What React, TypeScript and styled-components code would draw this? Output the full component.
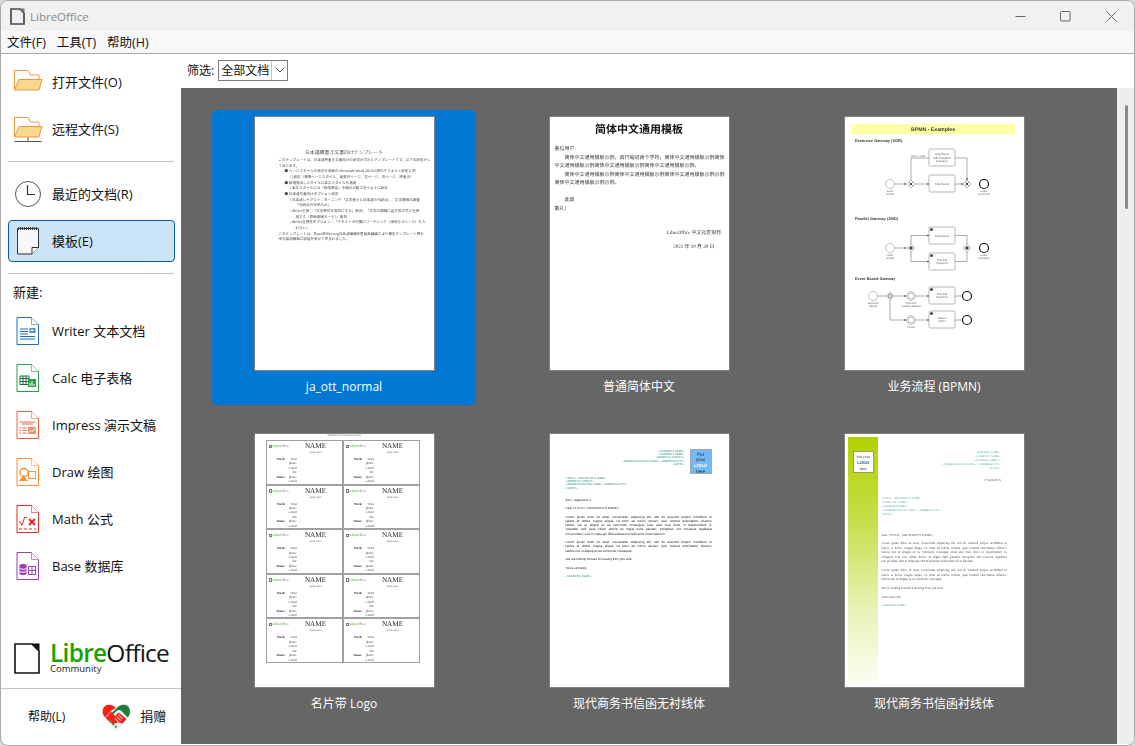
import React, { ReactElement, ReactNode } from 'react';
import styled, { createGlobalStyle } from 'styled-components';

const uiFont = `'Open Sans', 'Noto Sans CJK SC', sans-serif`;
const docFont = `'Liberation Serif', 'Noto Sans CJK SC', serif`;

const GlobalStyle = createGlobalStyle`
  html, body {
    margin: 0;
    padding: 0;
    background: #d6d8dc;
  }
  * {
    box-sizing: border-box;
  }
`;

const Window = styled.div`
  width: 1135px;
  height: 746px;
  display: flex;
  flex-direction: column;
  border: 1px solid #a9a9a9;
  border-radius: 8px;
  overflow: hidden;
  background: #fff;
  font-family: ${uiFont};
  color: #111;
`;

const TitleBar = styled.div`
  height: 30px;
  flex: none;
  display: flex;
  align-items: center;
  padding-left: 9px;
  background: #f1f1f1;
`;

const TitleText = styled.span`
  margin-left: 5px;
  font-size: 11.5px;
  color: #8b8b8b;
`;

const WindowButtons = styled.div`
  margin-left: auto;
  display: flex;
`;

const WindowButton = styled.div`
  width: 45.5px;
  height: 30px;
  display: flex;
  align-items: center;
  justify-content: center;
`;

const MenuBar = styled.div`
  height: 23px;
  flex: none;
  display: flex;
  align-items: center;
  gap: 11px;
  padding: 0 0 1px 6px;
  background: #f8f8f8;
  border-bottom: 1px solid #a8a8a8;
  font-size: 12.5px;
`;

const Body = styled.div`
  flex: 1;
  min-height: 0;
  display: flex;
`;

const Sidebar = styled.nav`
  width: 180px;
  flex: none;
  display: flex;
  flex-direction: column;
  padding-top: 7px;
`;

const NavGroup = styled.div<{ $top?: number }>`
  display: flex;
  flex-direction: column;
  gap: 5px;
  margin-top: ${(p) => p.$top ?? 0}px;
  padding: 0 6px 0 7px;
`;

const NavButton = styled.div<{ $active?: boolean }>`
  height: 42px;
  display: flex;
  align-items: center;
  border: 1px solid ${(p) => (p.$active ? '#0b5ca6' : 'transparent')};
  border-radius: 4px;
  background: ${(p) => (p.$active ? '#cce4f7' : 'transparent')};
  font-size: 13px;
`;

const NavLabel = styled.span`
  padding-bottom: 2px;
`;

const IconSlot = styled.span`
  width: 43px;
  flex: none;
  display: flex;
  justify-content: center;
  padding-right: 6px;
`;

const Divider = styled.div`
  height: 1px;
  margin: 11px 7px 0;
  background: #c4c4c4;
`;

const NewLabel = styled.div`
  height: 18px;
  margin: 9px 0 9px 12px;
  font-size: 13px;
  line-height: 18px;
`;

const LogoRow = styled.div`
  margin-top: auto;
  display: flex;
  align-items: flex-end;
  gap: 10px;
  padding: 0 0 15px 13px;
`;

const LogoMark = styled.span`
  display: flex;
  margin-bottom: -1px;
`;

const LogoText = styled.div`
  display: flex;
  flex-direction: column;
`;

const LogoName = styled.div`
  font-family: 'Open Sans', sans-serif;
  font-size: 24.5px;
  line-height: 24px;
  letter-spacing: -0.75px;
  color: #151515;
  white-space: nowrap;
`;

const LogoLibre = styled.span`
  color: #18a303;
  font-weight: 600;
`;

const LogoEdition = styled.div`
  font-size: 9.5px;
  line-height: 8px;
  color: #222;
`;

const SidebarFooter = styled.div`
  height: 57px;
  flex: none;
  display: flex;
  align-items: center;
  border-top: 1px solid #c4c4c4;
  font-size: 12px;
`;

const HelpLink = styled.span`
  margin-left: 27px;
  padding-bottom: 2px;
`;

const DonateLink = styled.span`
  margin-left: 36px;
  display: flex;
  align-items: center;
  gap: 8px;
  font-size: 13px;
`;

const DonateText = styled.span`
  padding-bottom: 3px;
`;

const Main = styled.main`
  flex: 1;
  min-width: 0;
  display: flex;
  flex-direction: column;
  padding-bottom: 1px;
`;

const FilterBar = styled.div`
  height: 34px;
  flex: none;
  display: flex;
  align-items: center;
  gap: 4px;
  padding: 0 0 2px 6px;
  font-size: 12px;
`;

const FakeSelect = styled.div`
  width: 70px;
  height: 21px;
  display: flex;
  align-items: center;
  justify-content: space-between;
  border: 1px solid #7a7a7a;
  padding-left: 2px;
  font-size: 12px;
`;

const SelectArrow = styled.span`
  width: 16px;
  height: 19px;
  display: flex;
  align-items: center;
  justify-content: center;
  background: #fff;
  border-left: 1px solid #c8c8c8;
`;

const ContentRow = styled.div`
  flex: 1;
  min-height: 0;
  display: flex;
`;

const Gallery = styled.div`
  flex: 1;
  min-width: 0;
  overflow: hidden;
  display: grid;
  grid-template-columns: repeat(3, 264px);
  grid-auto-rows: 295px;
  gap: 22px 31px;
  padding: 22px 0 0 31px;
  background: #666;
`;

const GalleryItem = styled.figure<{ $selected?: boolean }>`
  margin: 0;
  display: flex;
  flex-direction: column;
  align-items: center;
  padding-top: 6px;
  border-radius: 5px;
  background: ${(p) => (p.$selected ? '#0078d4' : 'transparent')};
`;

const Page = styled.div`
  width: 181px;
  height: 255px;
  flex: none;
  overflow: hidden;
  border: 1px solid #808080;
  background: #fff;
  color: #333;
  text-rendering: geometricPrecision;

  & > * {
    filter: blur(0.3px);
  }
`;

const ItemLabel = styled.figcaption`
  margin-top: 8px;
  font-size: 12px;
  line-height: 16px;
  color: #fff;
`;

const ScrollTrack = styled.div`
  width: 17px;
  flex: none;
  padding: 17px 0 0 8px;
  background: #eeeeee;
`;

const ScrollThumb = styled.div`
  width: 3px;
  height: 104px;
  border-radius: 2px;
  background: #8a8a8a;
`;

/* --- template previews --- */

const JaPage = styled.div`
  padding: 33px 24px 0 24px;
  font-family: 'Noto Sans CJK JP', sans-serif;
  font-size: 3.55px;
  line-height: 5.65px;
  color: #444;
`;

const JaTitle = styled.div`
  margin-bottom: 2px;
  text-align: center;
  font-size: 4.9px;
  line-height: 6px;
`;

const JaLine = styled.div<{ $indent?: number }>`
  padding-left: ${(p) => p.$indent ?? 0}px;
  white-space: nowrap;
`;

const CnPage = styled.div`
  padding: 5px 5px 0 5px;
  font-family: ${docFont};
  font-size: 5px;
  line-height: 8.6px;
  color: #333;
`;

const CnTitle = styled.div`
  margin-bottom: 8px;
  text-align: center;
  font-size: 11px;
  line-height: 16px;
  font-weight: 700;
  color: #111;
`;

const CnLine = styled.div<{ $indent?: boolean; $gap?: number; $right?: number }>`
  margin-top: ${(p) => p.$gap ?? 0}px;
  padding-left: ${(p) => (p.$indent ? 10 : 0)}px;
  padding-right: ${(p) => p.$right ?? 0}px;
  text-align: ${(p) => (p.$right !== undefined ? 'right' : 'left')};
  white-space: nowrap;
`;

const CardSheet = styled.div`
  padding: 0 11px;
`;

const CardCaption = styled.div`
  height: 6px;
  text-align: center;
  font-family: 'Liberation Sans', sans-serif;
  font-size: 2.6px;
  line-height: 3px;
  color: #666;
`;

const CardGrid = styled.div`
  display: grid;
  grid-template-columns: 77px 77px;
  grid-auto-rows: 44.6px;
`;

const Card = styled.div`
  display: grid;
  grid-template-columns: 26px 1fr;
  grid-template-rows: 14px auto;
  padding: 2px 2px 0 2px;
  border: 0.8px solid #a0a0a0;
  overflow: hidden;
`;

const CardLogo = styled.div`
  display: flex;
  align-items: flex-start;
  gap: 1px;
  padding-top: 1px;
  font-family: 'Liberation Sans', sans-serif;
  font-size: 3.4px;
  line-height: 4px;
  color: #888;
`;

const CardLogoBox = styled.span`
  width: 3px;
  height: 3.5px;
  margin-top: 0.5px;
  border: 0.4px solid #777;
`;

const CardLogoGreen = styled.span`
  color: #2fae12;
`;

const CardName = styled.div`
  text-align: center;
  padding-right: 3px;
  font-family: 'Liberation Serif', serif;
  font-size: 7.2px;
  line-height: 7px;
  color: #222;
`;

const CardRole = styled.div`
  margin-top: 1px;
  font-size: 2.8px;
  line-height: 4px;
  color: #444;
`;

const CardDetails = styled.div`
  grid-column: 1 / 3;
  display: grid;
  grid-template-columns: 17px 11px;
  font-family: 'Liberation Serif', serif;
  font-size: 3.1px;
  line-height: 4.4px;
  color: #222;
  text-align: right;
`;

const CardKey = styled.span`
  font-weight: 700;
`;

const LetterPage = styled.div`
  padding: 15px 17px 0 16px;
  font-family: 'Liberation Sans', sans-serif;
  font-size: 3.1px;
  line-height: 4.2px;
  color: #222;
`;

const LetterHead = styled.div`
  display: flex;
  justify-content: flex-end;
  align-items: flex-start;
  gap: 5px;
`;

const TealBlock = styled.div<{ $right?: boolean; $lh?: number }>`
  padding-top: 0.5px;
  font-size: 2.8px;
  color: #1f8f84;
  line-height: ${(p) => p.$lh ?? 3.4}px;
  text-align: ${(p) => (p.$right ? 'right' : 'left')};
  white-space: nowrap;
`;

const LogoBox = styled.div`
  width: 22px;
  height: 25px;
  flex: none;
  padding-top: 1.5px;
  background: #73b9f5;
  border: 0.5px solid #9ab;
  text-align: center;
  font-size: 4.6px;
  line-height: 5.8px;
  color: #222;
`;

const LogoWord = styled.div`
  color: #fff;
  font-weight: 700;
`;

const LetterPara = styled.div<{ $top?: number }>`
  margin-top: ${(p) => p.$top ?? 4.4}px;
`;

const LoremLine = styled.div<{ $last?: boolean }>`
  text-align-last: ${(p) => (p.$last ? 'left' : 'justify')};
  white-space: nowrap;
`;

const SerifLetter = styled.div`
  display: flex;
  height: 100%;
  padding: 3px 0 0 3px;
  font-family: 'Liberation Serif', serif;
  font-size: 3.1px;
  line-height: 4.5px;
  color: #333;
`;

const GreenBand = styled.div`
  width: 30px;
  height: 245px;
  flex: none;
  padding: 14px 0 0 5px;
  background: linear-gradient(180deg, #b2d100 0%, #c9de4d 35%, #eaf3bc 72%, #fbfdf2 100%);
`;

const BandLogo = styled.div`
  width: 21.5px;
  height: 21.5px;
  padding-top: 2px;
  background: #fff;
  border: 0.8px solid #9aa05a;
  text-align: center;
  font-size: 4px;
  line-height: 5.8px;
  color: #333;
`;

const BandLogoWord = styled.div`
  color: #1b4f9c;
  font-weight: 700;
  font-family: 'Liberation Sans', sans-serif;
`;

const SerifBody = styled.div`
  flex: 1;
  min-width: 0;
  padding: 13px 17px 0 4px;
`;

const SerifHead = styled.div`
  padding-right: 6px;
`;

const DateLine = styled.div`
  margin-top: 7.5px;
  text-align: right;
`;

/* --- icons --- */

function FolderIcon({ remote }: { remote?: boolean }): ReactElement {
  return (
    <svg width="30" height="26" viewBox="0 0 30 26" fill="none">
      <path d="M1.500 21V1.500h13.500l2.500 4.500h8.500v5" fill="#fff" stroke="#f0974a" strokeWidth="1" />
      <path d="M6 10.500h23l-3 10.500h-24.500z" fill="#fad98f" stroke="#ef9347" strokeWidth="1" />
      {remote && <path d="M1.500 25.500h27M15 21.500v4" stroke="#555" strokeWidth="1" />}
    </svg>
  );
}

function ClockIcon(): ReactElement {
  return (
    <svg width="28" height="28" viewBox="0 0 28 28" fill="none" stroke="#555" strokeWidth="1">
      <circle cx="14" cy="14" r="12.500" fill="#fff" />
      <path d="M13.500 5v9.500H21" strokeWidth="1.200" stroke="#333" />
    </svg>
  );
}

function TemplateIcon(): ReactElement {
  return (
    <svg width="24" height="30" viewBox="0 0 24 30" fill="none" stroke="#333" strokeWidth="1">
      <path d="M1.500 2.500h21v19l-6.500 6.500h-14.500z" fill="#f7f7f7" />
      <path d="M16 28v-6.500h6.500" fill="#fff" />
      <path
        d="M2.500 1v3M4.500 1v3M6.500 1v3M8.500 1v3M10.500 1v3M12.500 1v3M14.500 1v3M16.500 1v3M18.500 1v3M20.500 1v3"
        strokeWidth="0.900"
      />
    </svg>
  );
}

function DocIcon({ color, children }: { color: string; children: ReactNode }): ReactElement {
  return (
    <svg width="23" height="28" viewBox="0 0 23 28" fill="none">
      <path d="M1 .5h14.500l7 7v20h-21.500z" fill="#fff" stroke={color} />
      <path d="M15.500 .5v7h7" fill="#fff" stroke={color} strokeOpacity="0.6" />
      {children}
    </svg>
  );
}

const WriterIcon = (
  <DocIcon color="#1c6fb8">
    <path d="M4 12h8M4 14.500h8M4 17h8M4 19.500h15M4 22h15" stroke="#1c6fb8" />
    <rect x="13.500" y="11" width="6" height="5" fill="#4a90cc" />
    <rect x="15" y="12.500" width="2.500" height="1.500" fill="#fff" />
  </DocIcon>
);

const CalcIcon = (
  <DocIcon color="#2e9b48">
    <path d="M4 12h9v8.500h-9z" fill="#fff" stroke="#1f6b3a" />
    <path d="M4 14.500h9M4 17.500h9M7 12v8.500M10 12v8.500" stroke="#1f6b3a" />
    <rect x="12" y="15" width="8" height="8" fill="#2e9b48" />
    <path d="M14 22v-3M16 22v-5M18 22v-2" stroke="#fff" />
  </DocIcon>
);

const ImpressIcon = (
  <DocIcon color="#f0623c">
    <path d="M3.500 11h16M6 13h11" stroke="#f0623c" />
    <path d="M3.500 17h1.500M6.500 17h4M3.500 19.500h1.500M6.500 19.500h4M3.500 22h1.500M6.500 22h4" stroke="#f0623c" />
    <rect x="12" y="16" width="8" height="7" fill="#f4906f" />
    <path d="M13 21.500l2-2 2 1 2-3" stroke="#fff" />
  </DocIcon>
);

const DrawIcon = (
  <DocIcon color="#f59236">
    <circle cx="8" cy="14.500" r="4" fill="#fff" stroke="#f59236" strokeWidth="1.300" />
    <rect x="12.500" y="13.500" width="7" height="7" fill="#fff" stroke="#f59236" />
    <path d="M3 23l4.500-6 4.500 6z" fill="#f59236" />
  </DocIcon>
);

const MathIcon = (
  <DocIcon color="#e02a20">
    <path d="M3 17h1.500l1.500 3.500 2.500-8h2.500" stroke="#e02a20" />
    <path d="M13 14l6 6M19 14l-6 6" stroke="#e02a20" strokeWidth="2" />
    <path d="M3 24h3M8 24h3M13 24h3M18 24h2" stroke="#e02a20" />
  </DocIcon>
);

const BaseIcon = (
  <DocIcon color="#9b3fb0">
    <path d="M3.500 13.500c0-2 7-2 7 0v8c0 2-7 2-7 0z" fill="#9b3fb0" />
    <path d="M3.500 16.500c1.500 1 5.500 1 7 0M3.500 19.500c1.500 1 5.500 1 7 0" stroke="#fff" />
    <path d="M12.500 14.500h7v8h-7zM12.500 18.500h7M16 14.500v8" stroke="#9b3fb0" />
  </DocIcon>
);

function LogoDoc(): ReactElement {
  return (
    <svg width="26" height="31" viewBox="0 0 26 31" fill="none">
      <path d="M1 1h17l7 7v22h-24z" fill="#fff" stroke="#111" strokeWidth="1.600" />
      <path d="M18 0.500h7.500v7.500z" fill="#111" />
    </svg>
  );
}

function HeartIcon(): ReactElement {
  return (
    <svg width="31" height="29" viewBox="0 0 31 29">
      <path d="M15.500 5C12 .5 5.500 -.5 2.500 3.500c-3 4-1.500 9 2 13l11 12 11-12c3.500-4 5-9 2-13-3-4-9.500-3-13 1.500z" fill="#ecf2ec" />
      <path d="M15 5.500C12 1.500 6 .5 3.200 4c-2.500 3.200-1.700 7.500.8 10.500l6-6.500c1.500-1.700 3.500-2 5-2.500z" fill="#f5201a" />
      <path d="M15.500 5.500c3-4 9-5 12-1.500 2.500 3.200 1.700 7.500-.8 10.500l-6.200-6.500c-1.500-1.500-3.500-1-5 0l-4 4-2 -1z" fill="#1f7f3a" />
      <path d="M4.500 15l5.500-6.500 4 4.500 3.500-3.500 8 6.500-4 4.500-5-1-4.500 2z" fill="#f5201a" />
      <path d="M17 11.500l4.500 4M15.500 13.500l4.500 4M14 15.500l4 4" stroke="#fff" strokeWidth="1" />
      <path d="M9 19.500l2-1.500M11.500 22l2-1.500M14 24.500l2-1.500" stroke="#3f9a5a" strokeWidth="1.800" />
    </svg>
  );
}

/* --- previews --- */

const jaLines: [string, number][] = [
  ['このテンプレートは、日本語横書き文書向けの設定がされたテンプレートです。以下の設定がし', 0],
  ['てあります。', 0],
  ['■ ページスタイルの余白を旧版の Microsoft Word 2013以降のデフォルト設定と同', 6],
  ['じ設定（標準ページスタイル、通称のページ、左ページ、右ページ、横書き）', 11.5],
  ['■ 段階見出しスタイルに本文スタイルを適用', 6],
  ['• 本文スタイルには「段落頭詰」を開示が数に合うように設定', 11.5],
  ['■ 日本語文書向けオプション設定', 6],
  ['• 日本語レイアウト：カーニング「文字者少と日本語の句読点」、文字間隔の調整', 11.5],
  ['「句読点の半値のみ」', 17],
  ['• Writer全般：「文字単位を有効にする」無効、「文字の間隔に正方形のマス全使', 11.5],
  ['用する（原稿用紙モード）」無効', 17],
  ['• Writer互換性オプション：「テキストの行間にリーディング（余分なスペース）を入', 11.5],
  ['れない」', 17],
  ['このテンプレートは、OpenOffice.org日本語環境改善提案議論により策定テンプレート類を', 0],
  ['中文通用模板に影響を受けて作られました。', 0],
];

function JaPreview(): ReactElement {
  return (
    <JaPage>
      <JaTitle>日本語横書き文書向けテンプレート</JaTitle>
      {jaLines.map(([text, indent], i) => (
        <JaLine key={i} $indent={indent}>
          {text}
        </JaLine>
      ))}
    </JaPage>
  );
}

function CnPreview(): ReactElement {
  return (
    <CnPage>
      <CnTitle>简体中文通用模板</CnTitle>
      <CnLine>各位用户:</CnLine>
      <CnLine $indent>简体中文通用模板示例，首行缩进两个字符，简体中文通用模板示例简体</CnLine>
      <CnLine>中文通用模板示例简体中文通用模板示例简体中文通用模板示例。</CnLine>
      <CnLine $indent>简体中文通用模板示例简体中文通用模板示例简体中文通用模板示例示例</CnLine>
      <CnLine>简体中文通用模板示例示例。</CnLine>
      <CnLine $indent $gap={8}>
        此致
      </CnLine>
      <CnLine>敬礼！</CnLine>
      <CnLine $right={2} $gap={16}>
        LibreOffice 中文社区制作
      </CnLine>
      <CnLine $right={9} $gap={5.5}>
        2022 年 10 月 30 日
      </CnLine>
    </CnPage>
  );
}

function Gateway({ x, y, mark }: { x: number; y: number; mark: 'x' | '+' | 'o' }): ReactElement {
  return (
    <g>
      <path d={`M${x} ${y - 4}l4 4-4 4-4-4z`} fill="#fff" stroke="#777" strokeWidth="0.500" />
      {mark === 'x' && (
        <path d={`M${x - 1.500} ${y - 1.500}l3 3m0-3l-3 3`} stroke="#111" strokeWidth="0.800" />
      )}
      {mark === '+' && (
        <path d={`M${x - 2} ${y}h4M${x} ${y - 2}v4`} stroke="#111" strokeWidth="1" />
      )}
      {mark === 'o' && <circle cx={x} cy={y} r="1.800" fill="none" stroke="#333" strokeWidth="0.600" />}
    </g>
  );
}

function Task({ y, h = 17, x = 85, lines, gear }: { y: number; h?: number; x?: number; lines: string[]; gear?: boolean }): ReactElement {
  return (
    <g>
      <rect x={x} y={y} width="26" height={h} rx="1.500" fill="#fff" stroke="#888" strokeWidth="0.600" />
      {gear && <circle cx={x + 2.500} cy={y + 2.500} r="1.500" fill="#444" />}
      {lines.map((l, i) => (
        <text
          key={l}
          x={x + 13}
          y={y + h / 2 + 1 + (i - (lines.length - 1) / 2) * 3.600}
          fontSize="2.800"
          textAnchor="middle"
          fill="#555"
        >
          {l}
        </text>
      ))}
    </g>
  );
}

function Ev({ x, y, end, cap }: { x: number; y: number; end?: boolean; cap?: string[] }): ReactElement {
  return (
    <g>
      <circle cx={x} cy={y} r="4.500" fill="#fff" stroke={end ? '#111' : '#888'} strokeWidth={end ? 1.200 : 0.500} />
      {cap?.map((c, i) => (
        <text key={c} x={x} y={y + 7.500 + i * 3.200} fontSize="2.700" textAnchor="middle" fill="#555">
          {c}
        </text>
      ))}
    </g>
  );
}

function Arrow({ x, y, down }: { x: number; y: number; down?: boolean }): ReactElement {
  const d = down ? `M${x - 1} ${y - 1.500}h2l-1 1.500z` : `M${x - 1.500} ${y - 1}v2l1.500-1z`;
  return <path d={d} fill="#111" />;
}

function BpmnPreview(): ReactElement {
  const flow = { fill: 'none', stroke: '#555', strokeWidth: 0.500 };
  return (
    <svg width="179" height="253" viewBox="1 1 179 253" fontFamily="'Liberation Sans', sans-serif">
      <rect x="8" y="8" width="163" height="10.500" fill="#ffffa8" />
      <text x="89" y="15" fontSize="5.200" fontWeight="700" textAnchor="middle" fill="#333">
        BPMN - Examples
      </text>
      <text x="11" y="26" fontSize="3.900" fontWeight="700" fill="#333">
        Exclusive Gateway (XOR)
      </text>
      <path d="M50.500 68h12M71 68h14M67 64V42h18M111 68h8M111 42h12V64" {...flow} />
      <Ev x={46} y={68} cap={['Items', 'Picked']} />
      <Gateway x={67} y={68} mark="x" />
      <Arrow x={62} y={68} />
      <Arrow x={85} y={68} />
      <Arrow x={119} y={68} />
      <Arrow x={123} y={64} down />
      <text x={74} y={41} fontSize="2.700" textAnchor="middle" fill="#555">
        Price &gt; 50$
      </text>
      <Task y={33} lines={['Ship Parcel', 'with Transport', 'Insurance']} />
      <Task y={59} lines={['Ship Parcel']} />
      <Gateway x={123} y={68} mark="x" />
      <Ev x={140} y={68} end cap={['Order', 'Delivered']} />
      <text x="11" y="104" fontSize="3.900" fontWeight="700" fill="#333">
        Parallel Gateway (AND)
      </text>
      <path d="M50.500 132h12M67 128V119.500h18M67 136V145.500h18M111 119.500h12V128M111 145.500h12V136" {...flow} />
      <Ev x={46} y={132} cap={['Order', 'Ready']} />
      <Gateway x={67} y={132} mark="+" />
      <Arrow x={85} y={119.500} />
      <Arrow x={85} y={145.500} />
      <Arrow x={62} y={132} />
      <Task y={111} gear lines={['Ship Parcel']} />
      <Task y={137} gear lines={['Process', 'Payment']} />
      <Gateway x={123} y={132} mark="+" />
      <Ev x={140} y={132} end cap={['Order', 'Complete']} />
      <text x="11" y="164" fontSize="3.900" fontWeight="700" fill="#333">
        Event Based Gateway
      </text>
      <path d="M33.500 180h8.500M50 180h12.500M46 184v20h16.500M71.500 180h13.500M71.500 204h13.500M111 180h7.500M111 204h7.500" {...flow} />
      <Ev x={29} y={180} cap={['Payment', 'Issued']} />
      <Gateway x={46} y={180} mark="o" />
      <Ev x={67} y={180} cap={['Payment', 'Details Updated']} />
      <circle cx="67" cy="180" r="3" fill="none" stroke="#666" strokeWidth="0.500" />
      <Ev x={67} y={204} cap={['1 hour']} />
      <circle cx="67" cy="204" r="3" fill="none" stroke="#666" strokeWidth="0.500" />
      <Arrow x={85} y={180} />
      <Arrow x={85} y={204} />
      <Arrow x={62} y={180} />
      <Arrow x={62} y={204} />
      <Task y={171} gear lines={['Process', 'Payment']} />
      <Task y={195} gear lines={['Cancel', 'Order']} />
      <Ev x={123} y={180} end />
      <Ev x={123} y={204} end />
    </svg>
  );
}

function BusinessCards(): ReactElement {
  const rows: [string, string][] = [
    ['Work:', '1234'],
    ['', 'phone'],
    ['', 'e-mail'],
    ['', 'fax'],
    ['Home:', 'phone'],
    ['', 'e-mail'],
  ];
  return (
    <CardSheet>
      <CardCaption>Templates for business cards</CardCaption>
      <CardGrid>
        {Array.from({ length: 10 }).map((_, i) => (
          <Card key={i}>
            <CardLogo>
              <CardLogoBox />
              <span>
                <CardLogoGreen>Libre</CardLogoGreen>Office
              </span>
            </CardLogo>
            <CardName>
              NAME
              <CardRole>profession</CardRole>
            </CardName>
            <CardDetails>
              {rows.map(([k, v], j) => (
                <React.Fragment key={j}>
                  <CardKey>{k}</CardKey>
                  <span>{v}</span>
                </React.Fragment>
              ))}
            </CardDetails>
          </Card>
        ))}
      </CardGrid>
    </CardSheet>
  );
}

const lorem1 = [
  'Lorem ipsum dolor sit amet, consectetur adipiscing elit, sed do eiusmod tempor incididunt ut',
  'labore et dolore magna aliqua. Ut enim ad minim veniam, quis nostrud exercitation ullamco',
  'laboris nisi ut aliquip ex ea commodo consequat. Duis aute irure dolor in reprehenderit in',
  'voluptate velit esse cillum dolore eu fugiat nulla pariatur. Excepteur sint occaecat cupidatat',
  'non proident, sunt in culpa qui officia deserunt mollit anim id est laborum.',
];
const lorem2 = [
  'Lorem ipsum dolor sit amet, consectetur adipiscing elit, sed do eiusmod tempor incididunt ut',
  'labore et dolore magna aliqua. Ut enim ad minim veniam, quis nostrud exercitation ullamco',
  'laboris nisi ut aliquip ex ea commodo consequat.',
];

function Lorem({ lines }: { lines: string[] }): ReactElement {
  return (
    <LetterPara>
      {lines.map((l, i) => (
        <LoremLine key={i} $last={i === lines.length - 1}>
          {l}
        </LoremLine>
      ))}
    </LetterPara>
  );
}

function TealLines({ lines, right, lh }: { lines: string[]; right?: boolean; lh?: number }): ReactElement {
  return (
    <TealBlock $right={right} $lh={lh}>
      {lines.map((l) => (
        <div key={l}>{l}</div>
      ))}
    </TealBlock>
  );
}

const senderLines = ["<SENDER'S NAME>", '<COMPANY NAME>', '<ADDRESS STREET>', '<ADDRESS POSTAL CODE> <ADDRESS CITY>', '<STATE>'];
const recipientLines = ["<TITLE> <RECIPIENT'S NAME>", '<ADDRESS STREET>', '<ADDRESS POSTAL CODE> <ADDRESS CITY>', '<STATE>'];

function SansLetter(): ReactElement {
  return (
    <LetterPage>
      <LetterHead>
        <TealLines right lines={senderLines} />
        <LogoBox>
          Put
          <br />
          your
          <LogoWord>LOGO</LogoWord>
          here
        </LogoBox>
      </LetterHead>
      <LetterPara $top={2}>
        <TealLines lines={recipientLines} />
      </LetterPara>
      <LetterPara $top={7.500}>2017. augusztus 4.</LetterPara>
      <LetterPara>Dear &lt;TITLE&gt; &lt;RECIPIENT'S NAME&gt;,</LetterPara>
      <Lorem lines={lorem1} />
      <Lorem lines={lorem2} />
      <LetterPara>We are looking forward to hearing from you soon.</LetterPara>
      <LetterPara>Yours sincerely,</LetterPara>
      <LetterPara>
        <TealBlock>&lt;SENDER'S NAME&gt;</TealBlock>
      </LetterPara>
    </LetterPage>
  );
}

function SerifLetterPreview(): ReactElement {
  return (
    <SerifLetter>
      <GreenBand>
        <BandLogo>
          Put your
          <BandLogoWord>LOGO</BandLogoWord>
          here
        </BandLogo>
      </GreenBand>
      <SerifBody>
        <SerifHead>
          <TealLines right lh={4} lines={senderLines} />
          <DateLine>27 août 2013</DateLine>
        </SerifHead>
        <LetterPara $top={14}>
          <TealLines lh={3.900} lines={["<TITLE> <RECIPIENT'S NAME>", '<COMPANY NAME>', '<ADDRESS STREET>', '<ADDRESS POSTAL CODE> <ADDRESS CITY>', '<STATE>']} />
        </LetterPara>
        <LetterPara $top={16}>Dear &lt;TITLE&gt; &lt;RECIPIENT'S NAME&gt;,</LetterPara>
        <Lorem lines={lorem1} />
        <Lorem lines={lorem2} />
        <LetterPara>We are looking forward to hearing from you soon.</LetterPara>
        <LetterPara>Yours sincerely,</LetterPara>
        <LetterPara>
          <TealBlock>&lt;SENDER'S NAME&gt;</TealBlock>
        </LetterPara>
      </SerifBody>
    </SerifLetter>
  );
}

const templates: { label: string; preview: ReactElement; selected?: boolean }[] = [
  { label: 'ja_ott_normal', preview: <JaPreview />, selected: true },
  { label: '普通简体中文', preview: <CnPreview /> },
  { label: '业务流程 (BPMN)', preview: <BpmnPreview /> },
  { label: '名片带 Logo', preview: <BusinessCards /> },
  { label: '现代商务书信函无衬线体', preview: <SansLetter /> },
  { label: '现代商务书信函衬线体', preview: <SerifLetterPreview /> },
];

const newDocs: { label: string; icon: ReactElement }[] = [
  { label: 'Writer 文本文档', icon: WriterIcon },
  { label: 'Calc 电子表格', icon: CalcIcon },
  { label: 'Impress 演示文稿', icon: ImpressIcon },
  { label: 'Draw 绘图', icon: DrawIcon },
  { label: 'Math 公式', icon: MathIcon },
  { label: 'Base 数据库', icon: BaseIcon },
];

export default function App(): ReactElement {
  return (
    <React.Fragment>
      <GlobalStyle />
      <Window>
        <TitleBar>
          <svg width="15" height="17" viewBox="0 0 15 17" fill="none">
            <path d="M1 1h9l4 4v11h-13z" fill="#efefef" stroke="#4a4a4a" strokeWidth="1.700" />
            <path d="M10 .5h4.500v4.500z" fill="#777" />
          </svg>
          <TitleText>LibreOffice</TitleText>
          <WindowButtons>
            <WindowButton>
              <svg width="11" height="11" viewBox="0 0 11 11">
                <path d="M.5 5.500h10" stroke="#666" />
              </svg>
            </WindowButton>
            <WindowButton>
              <svg width="11" height="11" viewBox="0 0 11 11" fill="none">
                <rect x=".5" y=".5" width="9.500" height="9.500" rx="1" stroke="#666" />
              </svg>
            </WindowButton>
            <WindowButton>
              <svg width="11" height="11" viewBox="0 0 11 11">
                <path d="M.5 .5l10 10M10.500 .5l-10 10" stroke="#666" />
              </svg>
            </WindowButton>
          </WindowButtons>
        </TitleBar>
        <MenuBar>
          <span>文件(F)</span>
          <span>工具(T)</span>
          <span>帮助(H)</span>
        </MenuBar>
        <Body>
          <Sidebar>
            <NavGroup>
              <NavButton>
                <IconSlot>
                  <FolderIcon />
                </IconSlot>
                <NavLabel>打开文件(O)</NavLabel>
              </NavButton>
              <NavButton>
                <IconSlot>
                  <FolderIcon remote />
                </IconSlot>
                <NavLabel>远程文件(S)</NavLabel>
              </NavButton>
            </NavGroup>
            <Divider />
            <NavGroup $top={11}>
              <NavButton>
                <IconSlot>
                  <ClockIcon />
                </IconSlot>
                <NavLabel>最近的文档(R)</NavLabel>
              </NavButton>
              <NavButton $active>
                <IconSlot>
                  <TemplateIcon />
                </IconSlot>
                <NavLabel>模板(E)</NavLabel>
              </NavButton>
            </NavGroup>
            <Divider />
            <NewLabel>新建:</NewLabel>
            <NavGroup>
              {newDocs.map((d) => (
                <NavButton key={d.label}>
                  <IconSlot>{d.icon}</IconSlot>
                  <NavLabel>{d.label}</NavLabel>
                </NavButton>
              ))}
            </NavGroup>
            <LogoRow>
              <LogoMark>
                <LogoDoc />
              </LogoMark>
              <LogoText>
                <LogoName>
                  <LogoLibre>Libre</LogoLibre>Office
                </LogoName>
                <LogoEdition>Community</LogoEdition>
              </LogoText>
            </LogoRow>
            <SidebarFooter>
              <HelpLink>帮助(L)</HelpLink>
              <DonateLink>
                <HeartIcon />
                <DonateText>捐赠</DonateText>
              </DonateLink>
            </SidebarFooter>
          </Sidebar>
          <Main>
            <FilterBar>
              筛选:
              <FakeSelect>
                全部文档
                <SelectArrow>
                  <svg width="10" height="6" viewBox="0 0 10 6" fill="none">
                    <path d="M.5 .5l4.500 4.500 4.500-4.500" stroke="#555" />
                  </svg>
                </SelectArrow>
              </FakeSelect>
            </FilterBar>
            <ContentRow>
              <Gallery>
                {templates.map((t) => (
                  <GalleryItem key={t.label} $selected={t.selected}>
                    <Page>{t.preview}</Page>
                    <ItemLabel>{t.label}</ItemLabel>
                  </GalleryItem>
                ))}
              </Gallery>
              <ScrollTrack>
                <ScrollThumb />
              </ScrollTrack>
            </ContentRow>
          </Main>
        </Body>
      </Window>
    </React.Fragment>
  );
}
